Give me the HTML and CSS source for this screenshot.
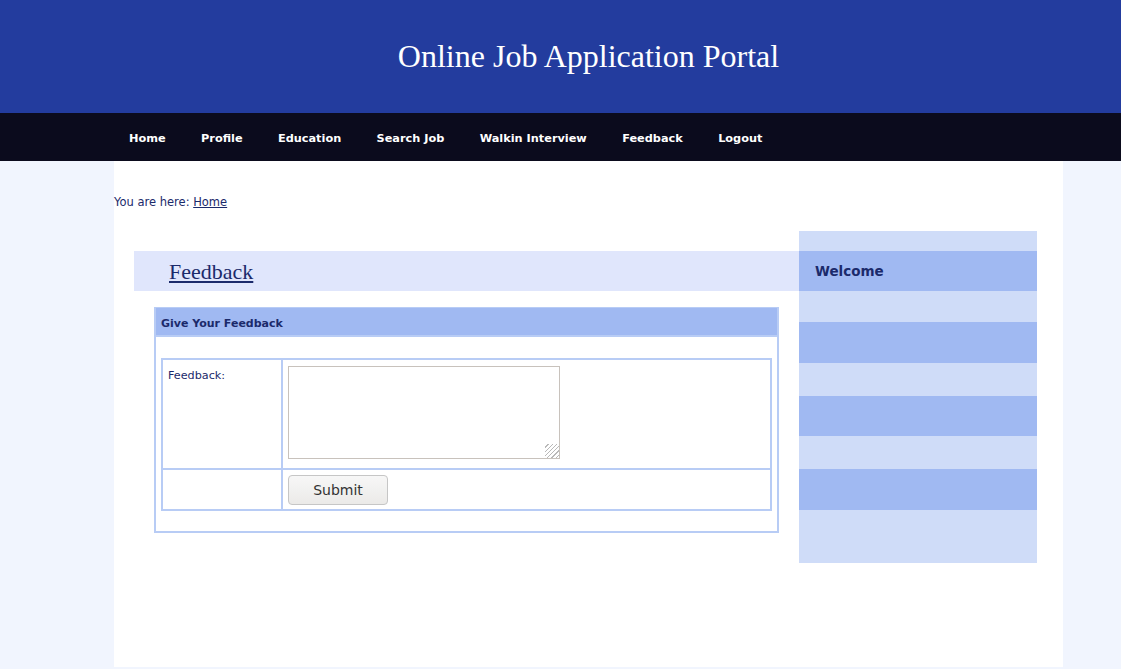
FILE: index.html
```html
<!DOCTYPE html>
<html>
<head>
<meta charset="utf-8">
<title>Online Job Application Portal</title>
<link rel="stylesheet" href="styles.css">
</head>
<body>
<header class="masthead">
  <div class="wrap">
    <h1 class="site-title">Online Job Application Portal</h1>
  </div>
</header>
<nav class="topnav">
  <ul class="wrap menu">
    <li><a href="#">Home</a></li>
    <li><a href="#">Profile</a></li>
    <li><a href="#">Education</a></li>
    <li><a href="#">Search Job</a></li>
    <li><a href="#">Walkin Interview</a></li>
    <li><a href="#">Feedback</a></li>
    <li><a href="#">Logout</a></li>
  </ul>
</nav>
<div class="wrap main">
  <p class="crumbs">You are here: <a href="#">Home</a></p>
  <div class="columns">
    <section class="content">
      <h2 class="page-title"><a href="#">Feedback</a></h2>
      <div class="panel">
        <div class="panel-head">Give Your Feedback</div>
        <form class="panel-body">
          <table class="form-table">
            <tr class="row-text">
              <td class="label">Feedback:</td>
              <td class="field"><textarea class="fb-text"></textarea></td>
            </tr>
            <tr class="row-btn">
              <td class="label"></td>
              <td class="field"><button type="button" class="btn">Submit</button></td>
            </tr>
          </table>
        </form>
      </div>
    </section>
    <aside class="sidebar">
      <h3 class="side-title">Welcome</h3>
      <ul class="side-list">
        <li class="s-light h31"></li>
        <li class="s-dark h41"></li>
        <li class="s-light h33"></li>
        <li class="s-dark h40"></li>
        <li class="s-light h33"></li>
        <li class="s-dark h41"></li>
        <li class="s-light h53"></li>
      </ul>
    </aside>
  </div>
</div>
</body>
</html>
```
FILE: styles.css
```css
html, body {
  margin: 0;
  padding: 0;
}
body {
  background: #f1f5fe;
  font-family: "DejaVu Sans", Verdana, sans-serif;
  color: #1b2a6b;
}
.wrap {
  width: 949px;
  margin-left: 114px;
  box-sizing: border-box;
}
.masthead {
  background: #233c9e;
  height: 113px;
  overflow: hidden;
}
.site-title {
  margin: 0;
  padding-top: 38px;
  text-align: center;
  font-family: "Liberation Serif", "Times New Roman", serif;
  font-weight: normal;
  font-size: 32px;
  line-height: 36px;
  color: #ffffff;
}
.topnav {
  background: #0b0b1d;
  height: 48px;
}
.menu {
  list-style: none;
  margin-top: 0;
  margin-bottom: 0;
  padding: 0;
  display: flex;
  height: 48px;
}
.menu li {
  display: block;
}
.menu a {
  display: block;
  padding: 2px 17.7px 0 17.7px;
  font-weight: bold;
  font-size: 11.3px;
  line-height: 48px;
  color: #ffffff;
  text-decoration: none;
  position: relative;
  left: -2.7px;
}
.main {
  background: #ffffff;
  height: 506px;
  padding-top: 35px;
}
.crumbs {
  margin: 0 0 22px 0;
  font-size: 11.5px;
  line-height: 13px;
  color: #1b2a6b;
}
.crumbs a {
  color: #1b2a6b;
}
.columns {
  display: flex;
  padding-left: 20px;
}
.content {
  width: 665px;
  padding-top: 20px;
}
.page-title {
  margin: 0;
  height: 40px;
  background: #e0e6fc;
  padding-left: 35px;
  font-family: "Liberation Serif", "Times New Roman", serif;
  font-weight: normal;
  font-size: 22px;
  line-height: 41px;
}
.page-title a {
  color: #1b2a6b;
}
.panel {
  margin: 16px 0 0 20px;
  width: 625px;
  box-sizing: border-box;
  border: 2px solid #b8ccf5;
  border-top-width: 1px;
}
.panel-head {
  background: #a0b9f2;
  height: 27px;
  border-bottom: 2px solid #b8ccf5;
  padding-left: 5px;
  font-weight: bold;
  font-size: 11px;
  line-height: 31px;
  color: #1b2a6b;
}
.panel-body {
  margin: 0;
  padding: 21px 5px 20px 5px;
}
.form-table {
  width: 611px;
  border-collapse: collapse;
  border: 2px solid #b8ccf5;
}
.form-table td {
  border: 2px solid #b8ccf5;
  padding: 0;
  vertical-align: top;
  box-sizing: border-box;
}
.form-table .label {
  width: 120px;
  font-size: 11.2px;
  line-height: 13px;
  color: #1b2a6b;
  padding: 9px 0 0 5px;
}
.row-text td {
  height: 110px;
}
.row-text .field {
  padding: 6px 0 0 5px;
}
.row-btn td {
  height: 41px;
}
.row-btn .field {
  padding: 5px 0 0 5px;
}
.fb-text {
  display: block;
  width: 272px;
  height: 93px;
  box-sizing: border-box;
  margin: 0;
  border: 1px solid #c8c2bc;
  resize: none;
  background-color: #ffffff;
  background-image: repeating-linear-gradient(135deg, transparent 0, transparent 2px, #b9b9b9 2px, #b9b9b9 3px);
  background-size: 14px 14px;
  background-position: right bottom;
  background-repeat: no-repeat;
}
.btn {
  display: block;
  width: 100px;
  height: 30px;
  box-sizing: border-box;
  margin: 0;
  border: 1px solid #c6c6c6;
  border-radius: 4px;
  background: linear-gradient(#f7f7f7, #ebeae8);
  font-family: "DejaVu Sans", Verdana, sans-serif;
  font-size: 14px;
  color: #333333;
  padding: 0;
}
.sidebar {
  width: 238px;
  background: #cfdcf8;
  padding-top: 20px;
  align-self: flex-start;
}
.side-title {
  margin: 0;
  height: 40px;
  background: #a0b9f2;
  padding-left: 16px;
  font-size: 13.5px;
  font-weight: bold;
  line-height: 40px;
  color: #1b2a6b;
}
.side-list {
  list-style: none;
  margin: 0;
  padding: 0;
}
.s-light { background: #cfdcf8; }
.s-dark { background: #a0b9f2; }
.h31 { height: 31px; }
.h33 { height: 33px; }
.h40 { height: 40px; }
.h41 { height: 41px; }
.h53 { height: 53px; }
```
